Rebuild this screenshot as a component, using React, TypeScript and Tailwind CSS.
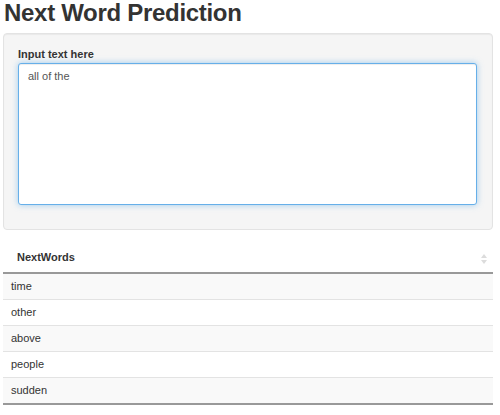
import React from "react";

const words = ["time", "other", "above", "people", "sudden"];

export default function App() {
  return (
    <div
      className="w-[500px] h-[415px] bg-white text-[#333] overflow-hidden pl-[3px] pr-[7px]"
      style={{ fontFamily: '"Liberation Sans", Arial, sans-serif' }}
    >
      <h2 className="text-[24px] leading-[26px] font-bold text-[#333] m-0 pl-px tracking-[-0.3px]">
        Next Word Prediction
      </h2>
      <div className="mt-[7px] bg-[#f5f5f5] border border-[#e3e3e3] rounded-[4px] pt-[12px] pb-[24px] pl-[14px] pr-[15px] shadow-[inset_0_1px_1px_rgba(0,0,0,0.05)]">
        <div className="text-[11px] leading-[16px] font-bold text-[#333] mb-[1px]">Input text here</div>
        <div className="h-[142px] bg-white border border-[#66afe9] rounded-[3px] shadow-[inset_0_1px_1px_rgba(0,0,0,0.075),0_0_6px_rgba(102,175,233,0.6)] px-[9px] py-[4px] text-[11px] leading-[16px] text-[#555]">
          all of the
        </div>
      </div>
      <div className="mt-[11px]">
        <div className="relative h-[33px] border-b-2 border-[#999] flex items-center pl-[14px] text-[11px] font-bold text-[#333]">
          <span className="mt-[2px]">NextWords</span>
          <svg className="absolute right-[6px] top-[13px]" width="6" height="10" viewBox="0 0 6 10">
            <path d="M3 0 L6 4 L0 4 Z" fill="#dcdcdc" />
            <path d="M3 10 L6 6 L0 6 Z" fill="#dcdcdc" />
          </svg>
        </div>
        <div className="border-b-2 border-[#999]">
          {words.map((w, i) => (
            <div
              key={w}
              className={`flex items-center pl-[8px] text-[11px] text-[#333] ${i > 0 ? "h-[26px] border-t border-[#e3e3e3]" : "h-[25px]"} ${i % 2 === 0 ? "bg-[#f9f9f9]" : "bg-white"}`}
            >
              {w}
            </div>
          ))}
        </div>
      </div>
    </div>
  );
}
